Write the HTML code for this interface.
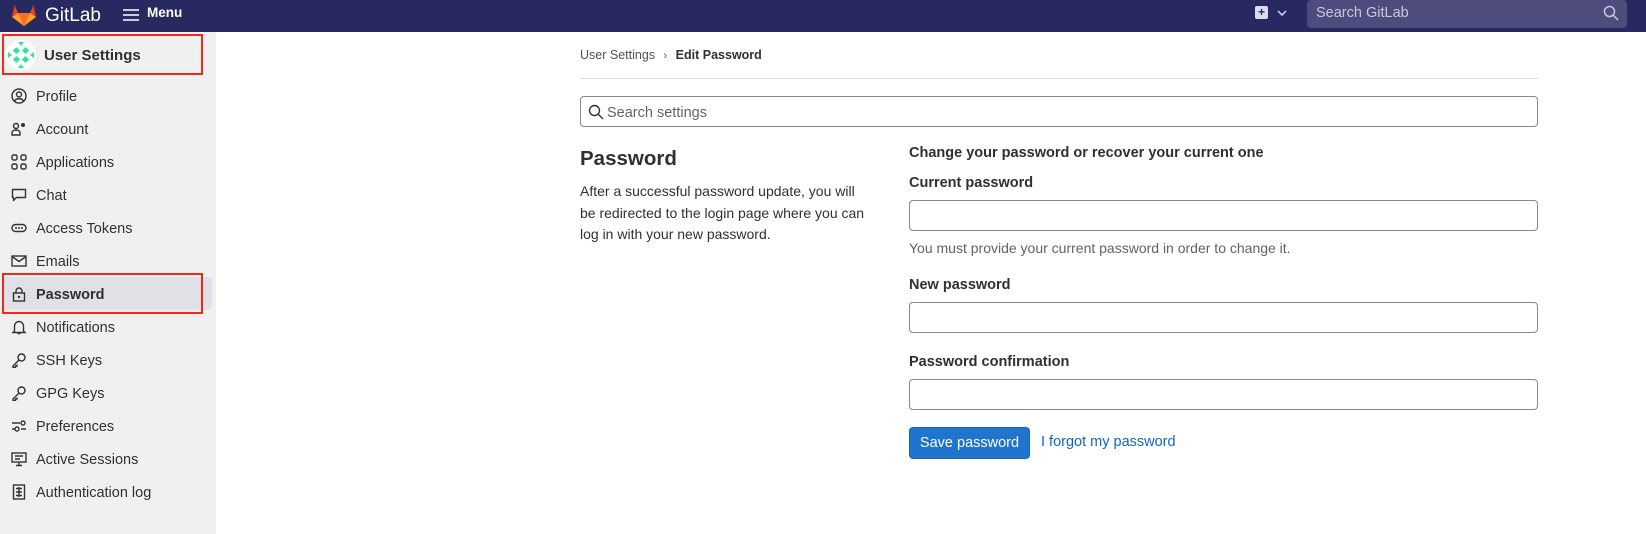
<!DOCTYPE html>
<html><head><meta charset="utf-8"><style>
*{box-sizing:border-box;margin:0;padding:0}
body{width:1646px;height:534px;overflow:hidden;background:#fff;font-family:"Liberation Sans",sans-serif;color:#303030;font-size:14.5px;position:relative}
.nav{position:absolute;left:0;top:0;width:1646px;height:32px;background:#292961}
.abs{position:absolute}
.side{position:absolute;left:0;top:32px;width:216px;height:502px;background:#f0f0f0}
.item{position:absolute;left:36px;font-size:14.5px;color:#303030}
.ico{position:absolute;left:11px;width:16px;height:16px}
.input{position:absolute;left:909px;width:629px;height:31px;border:1px solid #89888d;border-radius:4px;background:#fff}
.lbl{position:absolute;left:909px;font-weight:bold;font-size:14.5px}
</style></head><body>
<div class="nav">
  <svg class="abs" style="left:12px;top:4px" width="24" height="22" viewBox="0 0 24 22"><path d="M12 22L0 13 2.5 1 6 9h12l3.5-8L24 13z" fill="#e24329"/><path d="M12 22L6 9h12z" fill="#fc6d26"/><path d="M0 13l6-4 6 13z M24 13l-6-4-6 13z" fill="#fca326"/></svg>
  <div class="abs" style="left:45px;top:5px;color:#fff;font-size:19px">GitLab</div>
  <svg class="abs" style="left:123px;top:8px" width="16" height="14"><path d="M0 2h16M0 7h16M0 12h16" stroke="#fff" stroke-width="1.6"/></svg>
  <div class="abs" style="left:147px;top:5px;color:#fff;font-weight:bold;font-size:13.5px">Menu</div>
  <div class="abs" style="left:1255px;top:6px;width:13px;height:13px;background:#dcdcf0;border-radius:2px;color:#292961;font-size:12px;line-height:13px;text-align:center;font-weight:bold">+</div>
  <svg class="abs" style="left:1277px;top:10px" width="10" height="6"><path d="M1 1l4 4 4-4" stroke="#dcdcf0" stroke-width="1.5" fill="none"/></svg>
  <div class="abs" style="left:1307px;top:0;width:320px;height:28px;background:#4d4c7d;border-radius:4px"></div>
  <div class="abs" style="left:1316px;top:5px;color:#c8c8dc;font-size:14.5px">Search GitLab</div>
  <svg class="abs" style="left:1603px;top:5px" width="16" height="16"><circle cx="6.5" cy="6.5" r="5" stroke="#c8c8dc" stroke-width="1.5" fill="none"/><path d="M10 10l5 5" stroke="#c8c8dc" stroke-width="1.5"/></svg>
</div>
<div class="side">
  <div class="abs" style="left:2px;top:2px;width:201px;height:41px;border:2px solid #f0291c"></div>
  <svg class="abs" style="left:6px;top:8px" width="30" height="30" viewBox="0 0 30 30"><circle cx="15" cy="15" r="15" fill="#fff"/><g fill="#2ee59d"><rect x="8" y="8" width="5" height="5" transform="rotate(45 10.5 10.5)"/><rect x="17" y="8" width="5" height="5" transform="rotate(45 19.5 10.5)"/><rect x="8" y="17" width="5" height="5" transform="rotate(45 10.5 19.5)"/><rect x="17" y="17" width="5" height="5" transform="rotate(45 19.5 19.5)"/><path d="M2 12l4 3-4 3z M28 12l-4 3 4 3z M12 2l3 4 3-4z M12 28l3-4 3 4z"/></g></svg>
  <div class="abs" style="left:44px;top:15px;font-weight:bold;font-size:15px">User Settings</div>
  <div class="abs" style="left:2px;top:245px;width:210px;height:33px;background:#e1e0e6;border-radius:4px"></div>
  <div class="abs" style="left:2px;top:241px;width:201px;height:41px;border:2px solid #f0291c"></div>
</div>
<svg class="ico" style="top:88px" viewBox="0 0 16 16"><circle cx="8" cy="8" r="7" stroke="#333" stroke-width="1.4" fill="none"/><circle cx="8" cy="6.5" r="2.5" stroke="#333" stroke-width="1.4" fill="none"/><path d="M3.5 13c1.5-3 7.5-3 9 0" stroke="#333" stroke-width="1.4" fill="none"/></svg>
<div class="item" style="top:89px">Profile</div>
<svg class="ico" style="top:121px" viewBox="0 0 16 16"><circle cx="5" cy="5" r="2.5" stroke="#333" stroke-width="1.4" fill="none"/><path d="M1 14v-2c0-2 2-3 4-3s4 1 4 3v2z" stroke="#333" stroke-width="1.4" fill="none"/><circle cx="12" cy="4" r="2" fill="#333"/></svg>
<div class="item" style="top:122px">Account</div>
<svg class="ico" style="top:154px" viewBox="0 0 16 16"><g stroke="#333" stroke-width="1.4" fill="none"><rect x="1" y="1" width="5" height="5" rx="1.5"/><rect x="10" y="1" width="5" height="5" rx="1.5"/><rect x="1" y="10" width="5" height="5" rx="1.5"/><rect x="10" y="10" width="5" height="5" rx="1.5"/></g></svg>
<div class="item" style="top:155px">Applications</div>
<svg class="ico" style="top:187px" viewBox="0 0 16 16"><path d="M1.5 2.5h13v8h-9l-3 3v-3h-1z" stroke="#333" stroke-width="1.4" fill="none" stroke-linejoin="round"/></svg>
<div class="item" style="top:188px">Chat</div>
<svg class="ico" style="top:220px" viewBox="0 0 16 16"><rect x="1" y="4.5" width="14" height="7" rx="3.5" stroke="#333" stroke-width="1.4" fill="none"/><g fill="#333"><circle cx="5" cy="8" r="1"/><circle cx="8" cy="8" r="1"/><circle cx="11" cy="8" r="1"/></g></svg>
<div class="item" style="top:221px">Access Tokens</div>
<svg class="ico" style="top:253px" viewBox="0 0 16 16"><rect x="1" y="3" width="14" height="10" stroke="#333" stroke-width="1.4" fill="none"/><path d="M1 3.5l7 5 7-5" stroke="#333" stroke-width="1.4" fill="none"/></svg>
<div class="item" style="top:254px">Emails</div>
<svg class="ico" style="top:286px" viewBox="0 0 16 16"><rect x="2.5" y="7" width="11" height="8" stroke="#333" stroke-width="1.4" fill="none"/><path d="M5 7V5a3 3 0 016 0v2" stroke="#333" stroke-width="1.4" fill="none"/><circle cx="8" cy="11" r="1.2" fill="#333"/></svg>
<div class="item" style="top:287px;font-weight:bold">Password</div>
<svg class="ico" style="top:319px" viewBox="0 0 16 16"><path d="M3.5 12V7a4.5 4.5 0 019 0v5l1.5 1.5h-12z M6.5 14.5h3" stroke="#333" stroke-width="1.4" fill="none"/></svg>
<div class="item" style="top:320px">Notifications</div>
<svg class="ico" style="top:352px" viewBox="0 0 16 16"><circle cx="10.5" cy="5.5" r="3.5" stroke="#333" stroke-width="1.4" fill="none"/><path d="M8 8l-6 6v1.5h2.5V14h1.5v-1.5" stroke="#333" stroke-width="1.4" fill="none"/></svg>
<div class="item" style="top:353px">SSH Keys</div>
<svg class="ico" style="top:385px" viewBox="0 0 16 16"><circle cx="10.5" cy="5.5" r="3.5" stroke="#333" stroke-width="1.4" fill="none"/><path d="M8 8l-6 6v1.5h2.5V14h1.5v-1.5" stroke="#333" stroke-width="1.4" fill="none"/></svg>
<div class="item" style="top:386px">GPG Keys</div>
<svg class="ico" style="top:418px" viewBox="0 0 16 16"><g stroke="#333" stroke-width="1.4" fill="none"><path d="M1 5h8M1 11h3M10 11h5"/><circle cx="12" cy="5" r="2"/><circle cx="6" cy="11" r="2"/></g></svg>
<div class="item" style="top:419px">Preferences</div>
<svg class="ico" style="top:451px" viewBox="0 0 16 16"><g stroke="#333" stroke-width="1.4" fill="none"><rect x="1" y="2" width="14" height="9"/><path d="M4 5h8M4 8h5M8 11v3M5 14.5h6"/></g></svg>
<div class="item" style="top:452px">Active Sessions</div>
<svg class="ico" style="top:484px" viewBox="0 0 16 16"><g stroke="#333" stroke-width="1.4" fill="none"><rect x="2.5" y="1" width="11" height="14"/><path d="M5 4.5h6M5 8h6M5 11.5h6M8 3v10"/></g></svg>
<div class="item" style="top:485px">Authentication log</div>

<div class="abs" style="left:580px;top:48px;font-size:12.5px;color:#535158">User Settings <span style="margin:0 5px;font-size:11px">›</span> <b style="color:#303030">Edit Password</b></div>
<div class="abs" style="left:580px;top:78px;width:958px;height:1px;background:#dcdcde"></div>
<div class="abs" style="left:580px;top:96px;width:958px;height:31px;border:1px solid #89888d;border-radius:4px"></div>
<svg class="abs" style="left:588px;top:104px" width="16" height="16"><circle cx="6.5" cy="6.5" r="5" stroke="#333" stroke-width="1.4" fill="none"/><path d="M10 10l5 5" stroke="#333" stroke-width="1.4"/></svg>
<div class="abs" style="left:607px;top:105px;color:#626168;font-size:14.5px">Search settings</div>
<div class="abs" style="left:580px;top:147px;font-size:20.5px;font-weight:bold;color:#303030">Password</div>
<div class="abs" style="left:580px;top:181px;width:320px;line-height:21.5px;font-size:14px;white-space:nowrap">After a successful password update, you will<br>be redirected to the login page where you can<br>log in with your new password.</div>
<div class="lbl" style="top:145px">Change your password or recover your current one</div>
<div class="lbl" style="top:175px">Current password</div>
<div class="input" style="top:200px"></div>
<div class="abs" style="left:909px;top:240px;color:#626168;font-size:14px">You must provide your current password in order to change it.</div>
<div class="lbl" style="top:277px">New password</div>
<div class="input" style="top:302px"></div>
<div class="lbl" style="top:354px">Password confirmation</div>
<div class="input" style="top:379px"></div>
<div class="abs" style="left:909px;top:427px;width:121px;height:32px;background:#1f75cb;border:1px solid #1068bf;border-radius:4px;color:#fff;font-size:14.5px;line-height:30px;text-align:center">Save password</div>
<div class="abs" style="left:1041px;top:434px;color:#1068bf;font-size:14.5px">I forgot my password</div>
</body></html>
